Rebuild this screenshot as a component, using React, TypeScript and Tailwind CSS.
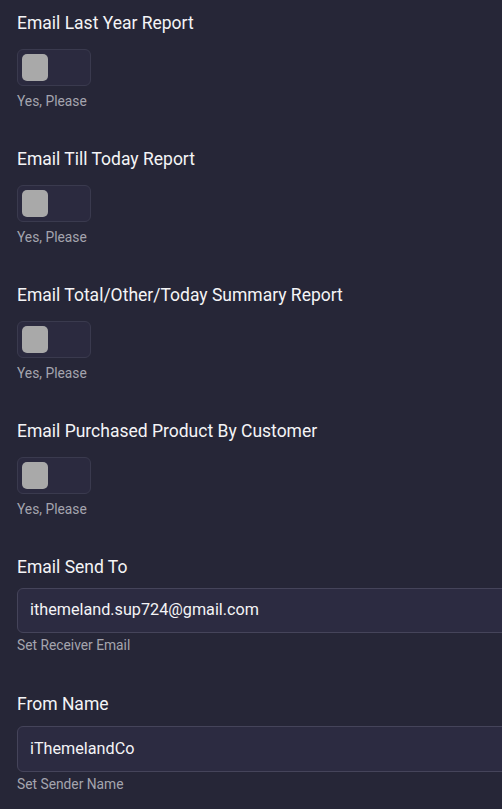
import React from "react";

const toggles = [
  "Email Last Year Report",
  "Email Till Today Report",
  "Email Total/Other/Today Summary Report",
  "Email Purchased Product By Customer",
];

function ToggleField({ label }: { label: string }) {
  return (
    <div className="flex flex-col items-start">
      <div className="text-[17.5px] leading-[24px] text-[#f4f4f6]">{label}</div>
      <div className="mt-[14px] flex h-[37px] w-[74px] items-center rounded-[6px] border border-[#3a3a4e] bg-[#2b2a3f] pl-[4px]">
        <div className="h-[27px] w-[26px] rounded-[5px] bg-[#a9a9a9]" />
      </div>
      <div className="mt-[5px] text-[13.8px] leading-[20px] text-[#a4a4ae]">Yes, Please</div>
    </div>
  );
}

function InputField({
  label,
  value,
  help,
  extra,
}: {
  label: string;
  value: string;
  help: string;
  extra?: boolean;
}) {
  return (
    <div className={extra ? "mt-[1px] flex flex-col items-start" : "flex flex-col items-start"}>
      <div className="text-[17.5px] leading-[24px] text-[#f4f4f6]">{label}</div>
      <div
        className={
          extra
            ? "mt-[10px] flex h-[46px] w-[520px] items-center rounded-[6px] border border-[#45445a] bg-[#2c2b41] px-[12px]"
            : "mt-[9px] flex h-[45px] w-[520px] items-center rounded-[6px] border border-[#45445a] bg-[#2c2b41] px-[12px]"
        }
      >
        <span className="text-[16.2px] text-[#f4f4f6]">{value}</span>
      </div>
      <div className="mt-[2px] text-[13.8px] leading-[20px] text-[#a4a4ae]">{help}</div>
    </div>
  );
}

export default function App() {
  return (
    <div
      className="min-h-screen w-full overflow-hidden bg-[#262637] pl-[17px] pt-[11px]"
      style={{ fontFamily: "Roboto, 'Liberation Sans', sans-serif" }}
    >
      <div className="flex flex-col gap-[36px]">
        {toggles.map((t) => (
          <ToggleField key={t} label={t} />
        ))}
        <InputField label="Email Send To" value="ithemeland.sup724@gmail.com" help="Set Receiver Email" />
        <InputField label="From Name" value="iThemelandCo" help="Set Sender Name" extra />
      </div>
    </div>
  );
}
